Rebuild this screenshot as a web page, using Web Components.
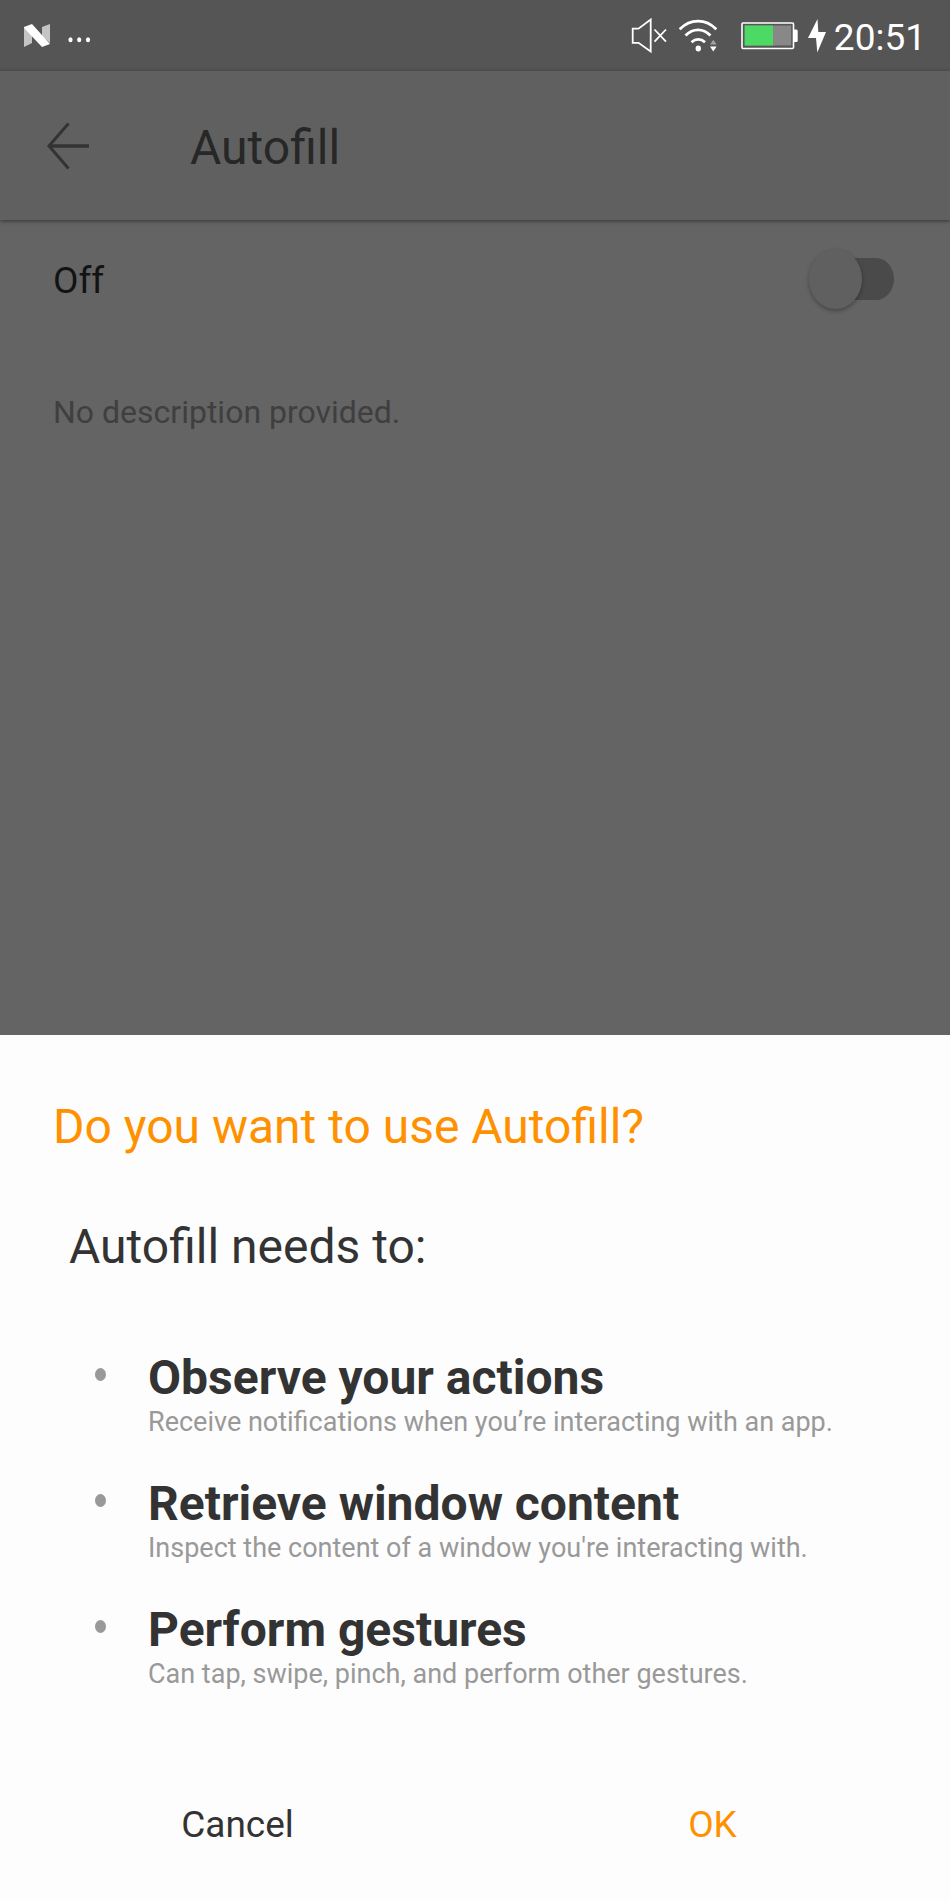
<!DOCTYPE html>
<html lang="en">
<head>
<meta charset="utf-8">
<meta name="viewport" content="width=device-width, initial-scale=1">
<title>Autofill</title>
<style>
  html { background: #646464; }
  body { margin: 0; font-family: Roboto, "Liberation Sans", sans-serif; }
</style>
</head>
<body>
<settings-screen>
  <status-bar slot="top" time="20:51"></status-bar>
  <app-bar slot="top">Autofill</app-bar>
  <switch-row>Off</switch-row>
  <service-description>No description provided.</service-description>
  <confirm-sheet slot="sheet">
    <span slot="title">Do you want to use Autofill?</span>
    <span slot="intro">Autofill needs to:</span>
    <capability-item name="Observe your actions">Receive notifications when you’re interacting with an app.</capability-item>
    <capability-item name="Retrieve window content">Inspect the content of a window you're interacting with.</capability-item>
    <capability-item name="Perform gestures">Can tap, swipe, pinch, and perform other gestures.</capability-item>
    <sheet-button slot="actions">Cancel</sheet-button>
    <sheet-button slot="actions" primary>OK</sheet-button>
  </confirm-sheet>
</settings-screen>

<script>
const define = (name, html, setup) => {
  const template = document.createElement('template');
  template.innerHTML = html;
  customElements.define(name, class extends HTMLElement {
    constructor() {
      super();
      this.attachShadow({ mode: 'open' }).append(template.content.cloneNode(true));
    }
    connectedCallback() { if (setup) setup(this, this.shadowRoot); }
  });
};

define('settings-screen', `
  <style>
    :host { display: flex; flex-direction: column; min-height: 100vh; background: #646464; }
    main { flex: 1; }
  </style>
  <slot name="top"></slot>
  <main><slot></slot></main>
  <slot name="sheet"></slot>
`);

define('status-bar', `
  <style>
    :host { display: flex; align-items: center; box-sizing: border-box; height: 71px; padding: 0 24px; background: #555; color: #fff; }
    svg { display: block; flex: none; }
    .more { margin-left: 18px; }
    .mute { margin-left: auto; }
    .wifi { margin-left: 12px; }
    .battery { margin-left: 24px; }
    .bolt { margin-left: 10px; }
    time { margin-left: 8px; padding-top: 4px; font-size: 37px; line-height: 48px; }
  </style>
  <svg width="26" height="71" viewBox="0 0 26 71" aria-hidden="true">
    <path d="M0 28L8 34V43L0 47ZM18 27L26 24V43L18 36Z" fill="#c4c4c4"/>
    <path d="M0 27L8 24L26 44L18 47L0 28Z" fill="#fff"/>
  </svg>
  <svg class="more" width="24" height="71" viewBox="0 0 24 71" fill="#fff" aria-hidden="true">
    <ellipse cx="2.500" cy="39.700" rx="2.100" ry="2.500"/><ellipse cx="11.200" cy="39.700" rx="2.100" ry="2.500"/><ellipse cx="20" cy="39.700" rx="2.100" ry="2.500"/>
  </svg>
  <svg class="mute" width="36" height="71" viewBox="0 0 36 71" fill="none" stroke="#fff" stroke-width="1.800" aria-hidden="true">
    <path d="M1.700 28.700H7.500L19.700 19.600V51.400L7.500 42.800H1.700Z"/>
    <path d="M23.500 29.500L35 41.700M35 29.500L23.500 41.700"/>
  </svg>
  <svg class="wifi" width="38" height="71" viewBox="0 0 38 71" fill="none" stroke="#fff" stroke-width="2.800" aria-hidden="true">
    <path d="M.7 29.300C11 18.300 27 18.300 37.300 29.300M6.500 35.500C14 28 24 28 31.500 35.500M12.500 42.300C16.500 38.500 22 38.500 26 42.300"/>
    <ellipse cx="19.300" cy="48.600" rx="2.700" ry="3" fill="#fff" stroke="none"/>
    <path d="M31 44.500L34.300 39.700L37.600 44.500Z" fill="#a2a2a2" stroke="none"/>
    <path d="M31 46.500H37.600L34.300 51.600Z" fill="#fff" stroke="none"/>
  </svg>
  <svg class="battery" width="57" height="71" viewBox="0 0 57 71" aria-hidden="true">
    <rect x="1" y="23" width="51.500" height="25.500" rx="1" fill="none" stroke="#fff" stroke-width="1.600"/>
    <rect x="3.700" y="25.500" width="46.500" height="20" fill="#888"/>
    <rect x="3.700" y="25.500" width="28.300" height="20" fill="#4cd964"/>
    <path d="M53 29.500H55.500Q56.700 29.500 56.700 31V41Q56.700 42 55.500 42H53Z" fill="#fff"/>
  </svg>
  <svg class="bolt" width="18" height="71" viewBox="0 0 18 71" aria-hidden="true">
    <path d="M9.500 19L0 38H8L9.300 52.500L18 32H10.300Z" fill="#fff"/>
  </svg>
  <time></time>
`, (el, root) => { root.querySelector('time').textContent = el.getAttribute('time'); });

define('app-bar', `
  <style>
    :host { display: flex; align-items: center; box-sizing: border-box; height: 149px; padding: 0 40px; background: #606060; color: #272727; box-shadow: 0 1px 4px rgba(0, 0, 0, .5); }
    button { flex: none; width: 56px; height: 56px; padding: 0; border: 0; background: none; color: #333; }
    svg { display: block; }
    h1 { margin: 0 0 0 94px; padding-top: 4px; font-size: 48px; line-height: 56px; font-weight: 400; }
  </style>
  <button type="button" aria-label="Back">
    <svg width="56" height="56" viewBox="0 0 56 56" fill="none" stroke="currentColor" stroke-width="3.600" aria-hidden="true">
      <path d="M9 28H49"/><path d="M28.500 5.500L9 28L28.500 50.500" stroke-width="3"/>
    </svg>
  </button>
  <h1><slot></slot></h1>
`);

define('switch-row', `
  <style>
    :host { display: block; color: #131313; }
    label { display: flex; align-items: center; justify-content: space-between; height: 118px; padding: 0 56px 0 53px; font-size: 37px; line-height: 48px; }
    span { padding-top: 4px; }
    input { appearance: none; display: grid; align-items: center; width: 85px; height: 60px; margin: 0; }
    input::before, input::after { content: ""; grid-area: 1 / 1; }
    input::before { justify-self: end; width: 72px; height: 42px; border-radius: 18px / 21px; background: #4a4a4a; }
    input::after { width: 53px; height: 60px; border-radius: 50%; background: #606060; box-shadow: 0 2px 4px rgba(0, 0, 0, .3); }
    input:checked::after { justify-self: end; }
  </style>
  <label><span><slot></slot></span><input type="checkbox" role="switch"></label>
`);

define('service-description', `
  <style>
    :host { display: block; padding: 50px 53px; color: #3f3f3f; }
    p { margin: 0; font-size: 32px; line-height: 48px; }
  </style>
  <p><slot></slot></p>
`);

define('confirm-sheet', `
  <style>
    :host { display: block; background: #fdfdfd; color: #333; }
    h2 { margin: 0; padding: 64px 53px 0; font-size: 48px; line-height: 56px; font-weight: 400; color: #ff9100; }
    p { margin: 0; padding: 64px 69px 0; font-size: 48px; line-height: 56px; }
    .list { padding: 75px 69px 0 95px; }
    .actions { display: grid; grid-template-columns: 1fr 1fr; padding: 45px 0 23px; }
  </style>
  <section role="dialog" aria-labelledby="title">
    <h2 id="title"><slot name="title"></slot></h2>
    <p><slot name="intro"></slot></p>
    <div class="list" role="list"><slot></slot></div>
    <div class="actions"><slot name="actions"></slot></div>
  </section>
`);

define('capability-item', `
  <style>
    :host { display: grid; grid-template-columns: 11px 1fr; column-gap: 42px; height: 126px; }
    i { height: 13px; margin-top: 18px; border-radius: 50%; background: #999; }
    h3 { margin: 0; font-size: 48px; line-height: 56px; font-weight: 700; }
    p { margin: 0; font-size: 27px; line-height: 32px; color: #999; }
  </style>
  <i></i>
  <div><h3></h3><p><slot></slot></p></div>
`, (el, root) => {
  el.setAttribute('role', 'listitem');
  root.querySelector('h3').textContent = el.getAttribute('name');
});

define('sheet-button', `
  <style>
    :host { display: block; color: #333; }
    :host([primary]) { color: #ff9100; }
    button { width: 100%; height: 104px; padding: 0; border: 0; background: none; color: inherit; font: inherit; font-size: 37px; line-height: 48px; }
  </style>
  <button type="button"><slot></slot></button>
`);
</script>
</body>
</html>
